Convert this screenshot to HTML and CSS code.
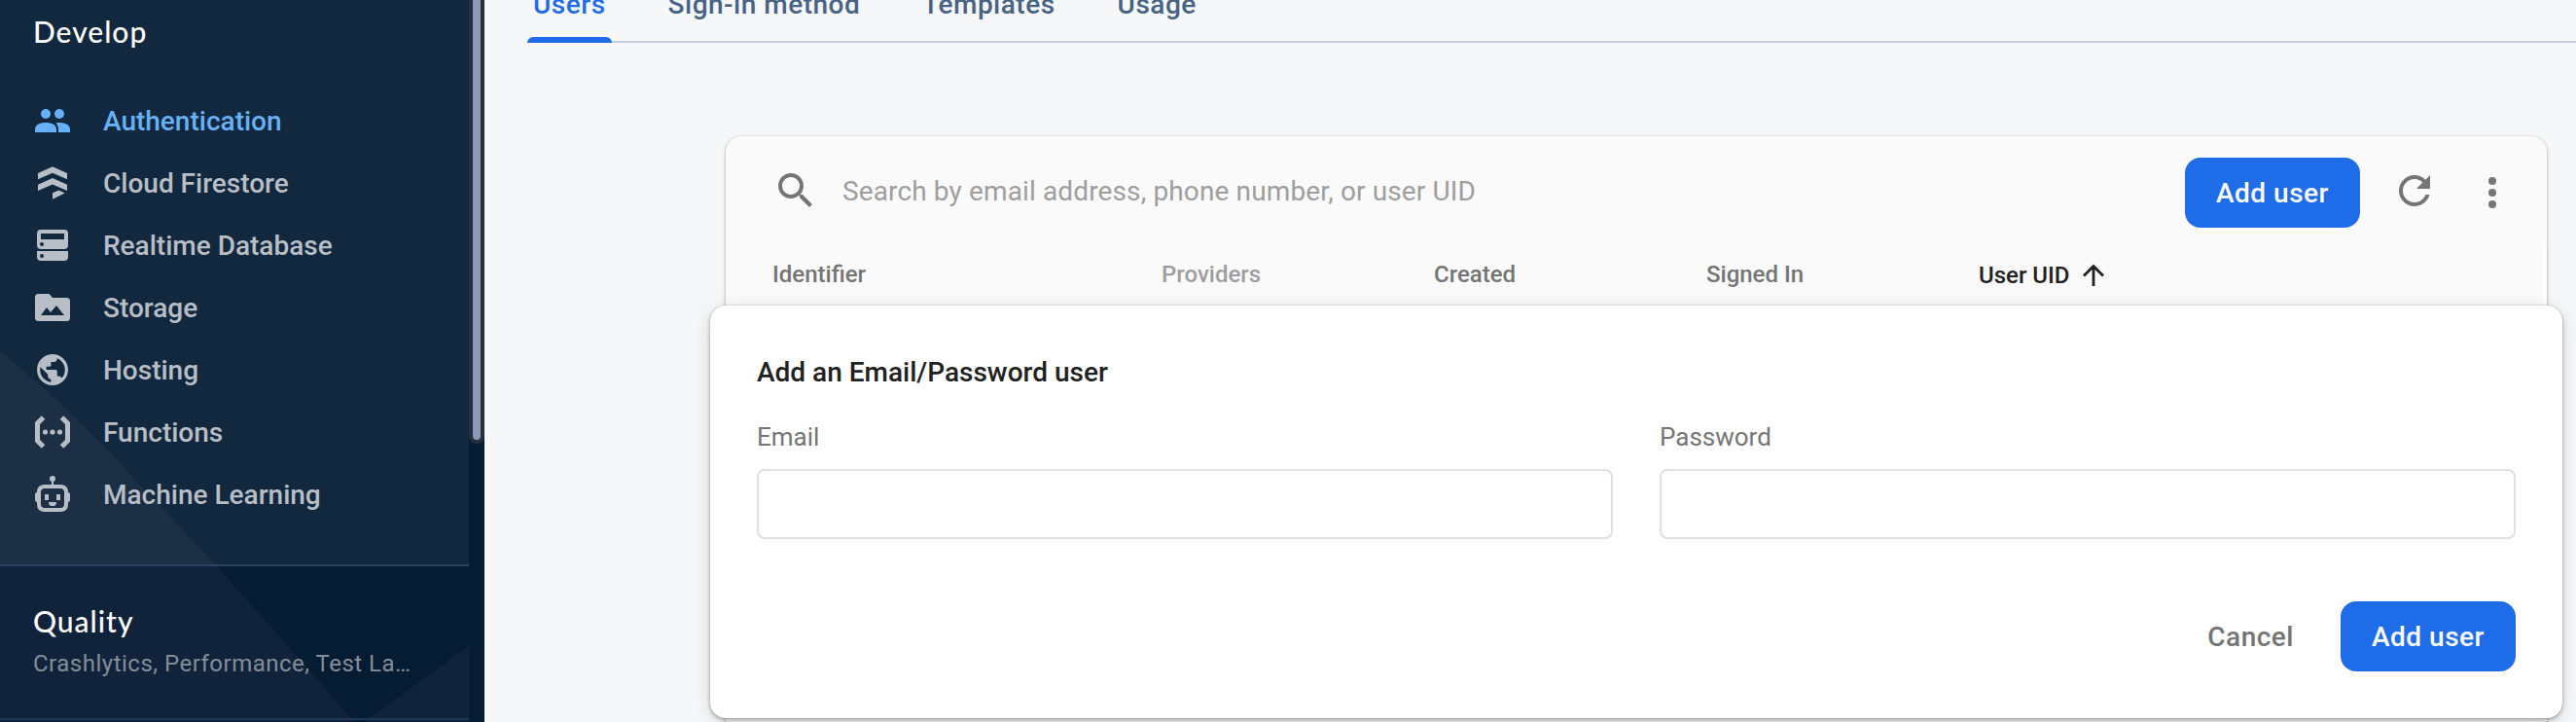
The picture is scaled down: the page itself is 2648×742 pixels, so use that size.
FILE: index.html
```
<!DOCTYPE html>
<html lang="en">
<head>
<meta charset="utf-8">
<title>Authentication</title>
<link rel="stylesheet" href="styles.css">
</head>
<body>
<div class="app">
  <aside class="sidebar">
    <svg class="backdrop" viewBox="0 0 482 742" aria-hidden="true">
      <path class="facet" d="M0 361 Q77 423 143 497 L223 582 L313 683 L364 742 H0Z"/>
      <path class="facet" d="M482 664 L374 742 H482Z"/>
    </svg>
    <section class="group group-open">
      <h2 class="group-title">Develop</h2>
      <nav class="nav">
        <a class="nav-item active"><svg class="nav-icon" viewBox="0 0 40 40"><circle cx="13" cy="13" r="5"/><circle cx="27" cy="13" r="5"/><path d="M2 32V29C2 24.500 6.500 22 13 22S24 24.500 24 29V32Z"/><path d="M23.500 22.200C32 21.500 38 24 38 29V32H26V29C26 26 25 24 23.500 22.200Z"/></svg><span>Authentication</span></a>
        <a class="nav-item"><svg class="nav-icon" viewBox="0 0 40 40"><path d="M20 3.300L35 10V16.200L20 9.800L5 16.200V10Z"/><path d="M20 15L35 21.700V28L20 21.500L5 28V21.700Z"/><path d="M20 30.300L26.500 27.500L32.700 30.500L20 36.700Z"/></svg><span>Cloud Firestore</span></a>
        <a class="nav-item"><svg class="nav-icon" viewBox="0 0 40 40"><path fill-rule="evenodd" d="M8 4H32Q36 4 36 8V20Q36 24 32 24H8Q4 24 4 20V8Q4 4 8 4ZM8 8V14H32V8ZM9 17A2 2 0 1 0 9 21A2 2 0 1 0 9 17Z"/><path fill-rule="evenodd" d="M4 26H36V32Q36 36 32 36H8Q4 36 4 32ZM9 29A2 2 0 1 0 9 33A2 2 0 1 0 9 29Z"/></svg><span>Realtime Database</span></a>
        <a class="nav-item"><svg class="nav-icon" viewBox="0 0 40 40"><path fill-rule="evenodd" d="M5.500 6H16.500L20 10H34.500Q38 10 38 13.500V30.500Q38 34 34.500 34H5.500Q2 34 2 30.500V9.500Q2 6 5.500 6ZM8 28H32L24 18L18 25L14 20Z"/></svg><span>Storage</span></a>
        <a class="nav-item"><svg class="nav-icon" viewBox="-0.500 -0.500 25 25"><path d="M12 2C6.480 2 2 6.480 2 12s4.480 10 10 10 10-4.480 10-10S17.520 2 12 2zm-1 17.930c-3.950-.490-7-3.850-7-7.930 0-.620.080-1.210.210-1.790L9 15v1c0 1.100.900 2 2 2v1.930zm6.900-2.540c-.260-.810-1-1.390-1.900-1.390h-1v-3c0-.550-.450-1-1-1H8v-2h2c.550 0 1-.450 1-1V7h2c1.100 0 2-.900 2-2v-.410c2.930 1.190 5 4.060 5 7.410 0 2.080-.800 3.970-2.100 5.390z"/></svg><span>Hosting</span></a>
        <a class="nav-item"><svg class="nav-icon" viewBox="0 0 40 40"><path class="stroke" d="M10.500 5L4.500 11V29L10.500 35M29.500 5L35.500 11V29L29.500 35"/><circle cx="12.500" cy="20" r="2.600"/><circle cx="20" cy="20" r="2.600"/><circle cx="27.500" cy="20" r="2.600"/></svg><span>Functions</span></a>
        <a class="nav-item"><svg class="nav-icon" viewBox="0 0 40 40"><circle cx="20" cy="4" r="3"/><path d="M19 4H21V11H19Z"/><path fill-rule="evenodd" d="M12 10H28Q36 10 36 18Q38 18 38 20V25Q38 28 36 28V30Q36 38 28 38H12Q4 38 4 30V28Q2 28 2 25V20Q2 18 4 18Q4 10 12 10ZM12 14Q8 14 8 18V30Q8 34 12 34H28Q32 34 32 30V18Q32 14 28 14Z"/><path d="M12 20H16V26H12ZM24 20H28V26H24ZM16 28H24Q24 32 21 32H19Q16 32 16 28Z"/></svg><span>Machine Learning</span></a>
      </nav>
    </section>
    <section class="group group-closed">
      <h2 class="group-title">Quality</h2>
      <p class="group-note">Crashlytics, Performance, Test La…</p>
    </section>
  </aside>
  <div class="scroll-track"><div class="scroll-thumb"><div class="scroll-grip"></div></div></div>
  <main class="main">
    <nav class="tabs">
      <a class="tab tab-active">Users</a>
      <a class="tab">Sign-in method</a>
      <a class="tab">Templates</a>
      <a class="tab">Usage</a>
    </nav>
    <div class="card">
      <div class="toolbar">
        <svg class="icon icon-search" viewBox="0 0 24 24"><path d="M15.500 14h-.790l-.280-.270C15.410 12.590 16 11.110 16 9.500 16 5.910 13.090 3 9.500 3S3 5.910 3 9.500 5.910 16 9.500 16c1.610 0 3.090-.590 4.230-1.570l.270.280v.790l5 4.990L20.490 19l-4.990-5zm-6 0C7.010 14 5 11.990 5 9.500S7.010 5 9.500 5 14 7.010 14 9.500 11.990 14 9.500 14z"/></svg>
        <span class="search-text">Search by email address, phone number, or user UID</span>
        <button class="button button-top">Add user</button>
        <svg class="icon icon-refresh" viewBox="0 0 24 24"><path d="M17.650 6.350C16.200 4.900 14.210 4 12 4c-4.420 0-7.990 3.580-7.990 8s3.570 8 7.990 8c3.730 0 6.840-2.550 7.730-6h-2.080c-.820 2.330-3.040 4-5.650 4-3.310 0-6-2.690-6-6s2.690-6 6-6c1.660 0 3.140.690 4.220 1.780L13 11h7V4l-2.350 2.350z"/></svg>
        <svg class="icon icon-more" viewBox="0 0 24 24"><circle cx="12" cy="6" r="2"/><circle cx="12" cy="12" r="2"/><circle cx="12" cy="18" r="2"/></svg>
      </div>
      <div class="table-head">
        <span>Identifier</span>
        <span class="muted">Providers</span>
        <span>Created</span>
        <span>Signed In</span>
        <span class="sorted">User UID<svg class="arrow" viewBox="0 0 24 24"><path d="M12 23V2.500M2 12.500L12 2.500L22 12.500"/></svg></span>
      </div>
      <form class="dialog">
        <h3 class="dialog-title">Add an Email/Password user</h3>
        <div class="fields">
          <label class="field">Email<input class="input" type="text"></label>
          <label class="field">Password<input class="input" type="password"></label>
        </div>
        <div class="actions">
          <button class="button-text" type="button">Cancel</button>
          <button class="button" type="button">Add user</button>
        </div>
      </form>
    </div>
  </main>
</div>
</body>
</html>
```
FILE: styles.css
```
* { box-sizing: border-box; }
body { margin: 0; font-family: Roboto, sans-serif; background: #f6f7f9; overflow: hidden; }
h2, h3, p { margin: 0; }
.app { display: flex; height: 742px; overflow: hidden; }

.sidebar { position: relative; width: 482px; flex: none; background: #051c33; }
.backdrop { position: absolute; inset: 0; width: 482px; height: 742px; }
.facet { fill: #ffc8f0; fill-opacity: .047; }
.group { position: relative; padding-left: 34px; }
.group-open { height: 582px; border-bottom: 2px solid #2a4263; background: rgba(255, 255, 255, .053); }
.group-closed { height: 158px; padding-top: 38px; border-bottom: 2px solid #1c3856; }
.group-title { font: 500 30px/36px Lato, sans-serif; color: #fff; letter-spacing: 1px; }
.group-open .group-title { padding-top: 14px; }
.group-note { margin-top: 10px; font-size: 24px; line-height: 32px; letter-spacing: .5px; color: #838e99; white-space: nowrap; }
.nav { display: flex; flex-direction: column; padding-top: 42px; }
.nav-item { display: flex; align-items: center; gap: 32px; height: 64px; font-weight: 500; font-size: 28px; color: #b8bec6; }
.active { color: #67b1f7; }
.nav-icon { width: 40px; height: 40px; fill: currentColor; flex: none; }
.stroke { fill: none; stroke: currentColor; stroke-width: 5; }

.scroll-track { width: 16px; flex: none; background: #051c33; }
.scroll-thumb { height: 456px; padding: 0 4px 4px; background: #282f3c; border-radius: 0 0 8px 8px; }
.scroll-grip { height: 452px; background: #8b9ab7; border-radius: 0 0 4px 4px; }

.main { flex: 1; padding-left: 44px; }
.tabs { display: flex; gap: 52px; height: 44px; border-bottom: 2px solid #c3cfdd; }
.tab { display: flex; flex-direction: column; justify-content: space-between; height: 44px; padding: 0 6px; font-weight: 500; font-size: 28px; line-height: 9px; letter-spacing: .5px; color: #476282; }
.tab-active { color: #1f6ce8; }
.tab-active::after { content: ""; height: 6px; margin: 0 -6px; background: #1f6ce8; border-radius: 6px 6px 0 0; }

.card { width: 1872px; height: 640px; margin: 96px 0 0 204px; background: #fafafa; border-radius: 16px 16px 0 0; box-shadow: 0 2px 4px rgba(0,0,0,.26), 0 0 2px rgba(0,0,0,.14); }
.toolbar { display: flex; align-items: center; height: 112px; padding: 0 32px 0 48px; }
.icon { width: 48px; height: 48px; fill: #757575; flex: none; }
.search-text { flex: 1; padding-left: 24px; font-size: 28px; letter-spacing: .13px; color: #9e9e9e; }
.button { width: 180px; height: 72px; padding: 0; border: 0; border-radius: 16px; background: #1f6ce8; color: #fff; font: 500 28px Roboto, sans-serif; letter-spacing: .5px; }
.button-top { margin-top: 4px; }
.icon-refresh { margin-left: 32px; }
.icon-more { margin: 4px 0 0 32px; }
.table-head { display: grid; grid-template-columns: 400px 280px 280px 280px 1fr; height: 62px; padding-left: 48px; line-height: 60px; font-weight: 500; font-size: 24px; color: #757575; border-right: 4px solid #fff; }
.muted { color: #9e9e9e; }
.sorted { color: #212121; display: flex; align-items: center; gap: 12px; }
.arrow { width: 24px; height: 24px; fill: none; stroke: currentColor; stroke-width: 2.800; }

.dialog { position: relative; height: 424px; margin: 0 -16px; padding: 48px; background: #fff; border-radius: 16px; box-shadow: 0 2px 4px rgba(0,0,0,.28), 0 0 2px rgba(0,0,0,.2), 0 4px 20px rgba(0,0,0,.12); }
.dialog-title { font-size: 28px; line-height: 42px; font-weight: 500; color: #212121; }
.fields { display: grid; grid-template-columns: 1fr 1fr; gap: 48px; margin-top: 27px; }
.field { display: flex; flex-direction: column; gap: 15px; font-size: 26px; line-height: 36px; color: #757575; }
.input { height: 72px; width: 100%; border: 2px solid #e0e0e0; border-radius: 8px; background: #fff; outline: none; }
.actions { display: flex; justify-content: flex-end; align-items: center; margin-top: 64px; gap: 48px; }
.button-text { padding: 0; border: 0; background: none; color: #757575; font: 500 28px Roboto, sans-serif; letter-spacing: .5px; }
```
